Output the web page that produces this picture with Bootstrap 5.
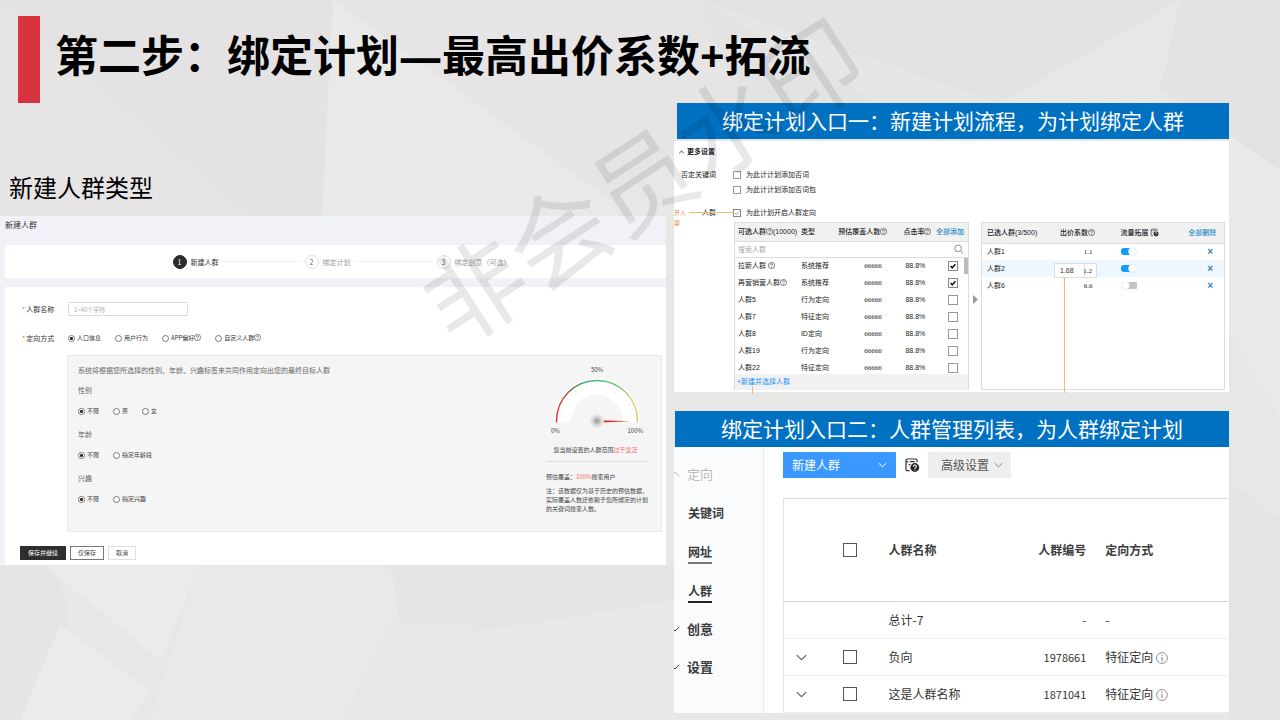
<!DOCTYPE html>
<html lang="zh-CN">
<head>
<meta charset="utf-8">
<meta name="viewport" content="width=device-width, initial-scale=1">
<title>第二步：绑定计划</title>
<link href="https://cdn.jsdelivr.net/npm/bootstrap@5.3.0/dist/css/bootstrap.min.css" rel="stylesheet">
<script src="https://cdn.jsdelivr.net/npm/bootstrap@5.3.0/dist/js/bootstrap.bundle.min.js"></script>
<style>
  body { font-family: "Noto Sans CJK SC", sans-serif; background: #e7e6e6; color: #333; }
  a { text-decoration: none; }
  .slide { min-height: 100vh; padding-bottom: 7px; }
  .backdrop { position: absolute; inset: 0; width: 100%; height: 100%; }
  .watermark { position: absolute; left: 50%; top: 177px; font-size: 100px; line-height: 150px; white-space: nowrap;
    transform: translate(-50%, -50%) rotate(-33deg); color: rgba(0, 0, 0, .09); pointer-events: none; z-index: 5; }

  .title-bar { padding: 16px 18px 0; gap: 15px; }
  .title-bar i { width: 22px; height: 87px; background: #d7343f; }
  .title-bar h1 { font-family: "Open Sans", "Noto Sans CJK SC", sans-serif; font-size: 43px; font-weight: 700; color: #000; line-height: 80px; margin: 0; white-space: nowrap; }
  .columns { gap: 8px; padding-right: 51px; }
  .col-form { flex: 666 1 0; min-width: 0; padding-top: 66px; }
  .col-entries { flex: 555 1 0; min-width: 0; }
  .subtitle { font-size: 24px; line-height: 36px; color: #000; margin: 0 0 11px 9px; font-weight: 400; }
  .banner { background: #0070c1; color: #fff; font-size: 21px; line-height: 34px; padding-bottom: 2px; text-align: center; margin: 0; font-weight: 400; white-space: nowrap; }

  /* audience form */
  .form-shot { background: #f1f2f7; padding-left: 5px; font-size: 7px; line-height: 10px; }
  .form-shot h3 { font-size: 8px; line-height: 10px; font-weight: 400; margin: 0; padding: 4px 0 15px; }
  .steps { height: 33px; background: #fff; padding-left: 12px; gap: 4px; list-style: none; margin: 0 0 9px; }
  .steps li { gap: 4px; color: #999; }
  .steps li b { width: 14px; height: 14px; border: 1px solid #ddd; border-radius: 50%; text-align: center; line-height: 12px; font-weight: 400; color: #666; }
  .steps li.now { color: #333; }
  .steps li.now b { background: #2b2b2b; border-color: #2b2b2b; color: #fff; }
  .steps .rule { width: 78px; height: 1px; background: #eee; }
  .form-card { background: #fff; padding: 15px 4px 5px 15px; }
  .form-card .field-name { width: 48px; padding-left: 2px; white-space: nowrap; }
  .form-card .field-name::before { content: "*"; color: #e66; margin-right: 1px; }
  .name-box { width: 120px; height: 14px; border: 1px solid #ddd; border-radius: 0; padding: 0 5px; font-size: 6px; line-height: 12px; min-height: 0; }
  .name-box::placeholder { color: #aaa; }
  .choices { gap: 14px; font-size: 6px; height: 10px; }
  .choices label { display: flex; align-items: center; gap: 2px; white-space: nowrap; }
  .choices .form-check-input { width: 7px; height: 7px; margin: 0; border: 1px solid #777; background-color: #fff; box-shadow: none; }
  .choices .form-check-input:checked { background-image: radial-gradient(circle, #222 0 1px, transparent 2px); background-size: 100%; }
  .rules-box { margin-left: 47px; border: 1px solid #e9e9e9; background: #f5f5f5; padding: 9px 13px 18px 10px; color: #666; }
  .rules-intro { margin-bottom: 10px; }
  .rules-box .choices { color: #444; margin: 11px 0 13px; }
  .rules-box .choices:last-child { margin-bottom: 0; }
  .estimate { width: 102px; font-size: 6px; line-height: 9px; color: #444; white-space: nowrap; }
  .estimate em { font-style: normal; color: #ef6a66; }
  .estimate .verdict { margin: 8px 0 7px; text-align: center; padding-right: 3px; }
  .estimate .coverage { border-top: 1px solid #ddd; padding-top: 10px; margin-bottom: 5px; }
  .act { height: 14px; border-radius: 0; font-size: 6px; line-height: 12px; padding: 0 7px; }
  .act-main { background: #2e2e2e; color: #fff; border-color: #2e2e2e; }
  .act-line { background: #fff; border-color: #777; color: #444; }
  .act-plain { background: #fff; border-color: #e0e0e0; color: #444; }

  /* plan settings */
  .plan-shot { margin-top: 2px; background: #fff; padding: 6px 4px 2px 0; font-size: 7px; line-height: 10px; color: #222; font-family: "Liberation Serif", "Noto Sans CJK SC", serif; position: relative; }
  .plan-shot table, .sansy { font-family: "Liberation Sans", "Noto Sans CJK SC", sans-serif; }
  .more { font-size: 7px; line-height: 10px; font-weight: 700; margin: 0 0 13px 5px; gap: 3px; }
  .opt-row .opt-name { width: 59px; padding-right: 17px; text-align: right; white-space: nowrap; }
  .opt-row label { display: flex; align-items: center; gap: 5px; height: 10px; }
  .box8, .box10, .box14 { border-radius: 0 !important; margin: 0 !important; border: 1px solid #999; background-color: #fff !important; box-shadow: none !important; display: block; }
  .box8 { width: 8px; height: 8px; }
  .box10 { width: 10px; height: 10px; }
  .box14 { width: 14px; height: 14px; border-color: #555; }
  .box10:checked { border-color: #888; background-image: url("data:image/svg+xml,%3Csvg xmlns='http://www.w3.org/2000/svg' viewBox='0 0 10 10'%3E%3Cpath d='M2 5l2 2.200L8 2.800' fill='none' stroke='%23111' stroke-width='1.900'/%3E%3C/svg%3E") !important; }
  .box8:checked { border-color: #888; background-image: url("data:image/svg+xml,%3Csvg xmlns='http://www.w3.org/2000/svg' viewBox='0 0 10 10'%3E%3Cpath d='M1.500 5l2.500 2.500L8.500 2.500' fill='none' stroke='%23777' stroke-width='1.200'/%3E%3C/svg%3E") !important; }
  .callout { position: absolute; left: 0; top: 67px; color: #f08a3c; white-space: nowrap; font-size: 6px; }
  .callout-line { position: absolute; left: 15px; top: 71px; width: 45px; height: 1px; background: #f7b872; }
  .pointer-line { position: absolute; width: 1px; background: #f7b872; }
  .pickers { padding-left: 60px; margin-top: 4px; gap: 4px; }
  .picker-a { flex: 235 1 0; min-width: 0; border: 1px solid #ddd; height: 168px; position: relative; }
  .picker-b { flex: 244 1 0; min-width: 0; border: 1px solid #ddd; height: 168px; position: relative; margin-left: -1px; }
  .grid7 { table-layout: fixed; margin: 0; --bs-table-bg: transparent; font-size: 7px; line-height: 10px; color: #222; white-space: nowrap; }
  .grid7 th { height: 18px; padding: 0 0 0 3px; font-weight: 500; background: #f1f1f1; border-bottom: 1px solid #ddd; vertical-align: middle; color: #222; }
  .grid7 td { height: 17px; padding: 0 0 0 3px; border: 0; vertical-align: middle; color: #222; }
  .grid7 a { color: #2a8cc4; }
  .grid7 .seen { padding-left: 29px; font-family: "Liberation Serif", serif; }
  .grid7 .rate { padding-left: 5px; }
  .grid7 .pick { padding-left: 15px; }
  .grid7 .picked th { height: 20px; }
  .grid7 .picked th:first-child, .grid7 .picked td:first-child { padding-left: 5px; }
  .finder { height: 16px; border-bottom: 1px solid #ddd; padding: 0 4px 0 3px; }
  .finder input { border: 0; padding: 0; font-size: 7px; line-height: 10px; min-height: 0; height: 12px; background: none; }
  .finder input::placeholder { color: #aaa; }
  .rows-window { height: 116px; overflow: hidden; position: relative; }
  .rows-window::after { content: ""; position: absolute; right: 0; top: 0; width: 4px; height: 16px; background: #bbb; }
  .new-link { display: block; height: 16px; line-height: 16px; padding-left: 2px; background: #f1f1f1; color: #1890ff; }
  .q { width: 7px; height: 7px; vertical-align: -1px; }
  .toggle { width: 16px !important; height: 9px !important; margin: 0 !important; border: 0 !important; display: block; border-radius: 0 !important; background-color: transparent !important; box-shadow: none !important; background-size: 100% 100% !important; background-position: 0 0 !important;
    background-image: url("data:image/svg+xml,%3Csvg xmlns='http://www.w3.org/2000/svg' viewBox='0 0 16 9'%3E%3Crect x='3' y='1' width='13' height='7' rx='1' fill='%23c4c4c4'/%3E%3Ccircle cx='4.500' cy='4.500' r='4' fill='%23fff' stroke='%23ddd' stroke-width='.6'/%3E%3C/svg%3E") !important; }
  .toggle:checked { background-image: url("data:image/svg+xml,%3Csvg xmlns='http://www.w3.org/2000/svg' viewBox='0 0 16 9'%3E%3Crect x='0' y='1' width='13' height='7' rx='3' fill='%23149bff'/%3E%3Ccircle cx='11.500' cy='4.500' r='4' fill='%23fff' stroke='%23ddd' stroke-width='.6'/%3E%3C/svg%3E") !important; }
  .grid7 .coef { text-align: right; padding-right: 25px; font-family: "Liberation Serif", serif; }
  .hot td { background: #eff7fe; }
  .kill { border: 0; background: none; padding: 0; margin-left: 19px; color: #3b7fc4; font-size: 10px; font-weight: 700; line-height: 10px; display: block; }
  .bid { position: absolute; left: 72px; top: 40px; width: 43px; height: 15px; border: 1px solid #ddd; background: #fff; }
  .bid input { width: 30px; height: 13px; min-height: 0; border: 0; border-right: 1px solid #ddd; border-radius: 0; padding: 0 5px; font-size: 7px; line-height: 13px; color: #333; background: none; }
  .bid span { position: absolute; right: 4px; top: 2px; font-family: "Liberation Serif", serif; }

  /* audience list */
  .entry-two { margin: 19px 0 0 1px; }
  .list-shot { background: #fff; overflow: hidden; }
  .side { width: 90px; padding-top: 8px; background: #f9fbfd; border-right: 1px solid #e6eaee; flex-wrap: nowrap; }
  .side a { color: #3c3c3c; font-size: 12px; font-weight: 700; height: 39px; padding-left: 14px; display: flex; align-items: center; }
  .side a.top { font-size: 13px; height: 38px; padding-left: 0; gap: 7px; }
  .side a.open { color: #bbb; font-weight: 400; }
  .side a span { line-height: 20px; border: solid transparent; border-width: 2px 0; }
  .side a.mid span { border-bottom-color: #777; }
  .side a.cur span { border-bottom-color: #222; }
  .list-main { padding: 5px 0 0 19px; min-width: 0; }
  .tool { height: 26px; border: 0; border-radius: 0; font-size: 12px; line-height: 26px; padding: 0 9px; display: flex; align-items: center; justify-content: space-between; }
  .tool-new { background: #3b98ff; color: #fff; width: 113px; }
  .tool-adv { background: #eee; color: #555; width: 83px; padding: 0 8px 0 13px; }
  .tool-adv svg { color: #888; }
  .tool-help { margin: 0 8px; width: 16px; height: 16px; }
  .grid12 { table-layout: fixed; margin: 20px 0 0; border-left: 1px solid #e3e3e3; border-top: 1px solid #ddd; font-size: 12px; line-height: 18px; white-space: nowrap; }
  .grid12 th { height: 103px; padding: 0; font-weight: 700; vertical-align: middle; border-bottom: 1px solid #d4d4d4; color: #3c3c3c; }
  .grid12 td { height: 37px; padding: 0; vertical-align: middle; border-bottom: 1px solid #eee; color: #333; }
  .grid12 .nm { padding-left: 7px; }
  .grid12 .no { text-align: right; padding-right: 9px; }
  .grid12 td.no { font-size: 11px; }
  .grid12 .way { padding-left: 10px; }
  .grid12 .box14 { margin: 0 auto !important; }
  .fold { width: 11px; height: 7px; color: #666; vertical-align: 1px; }
</style>
</head>
<body>
<svg class="d-none">
  <symbol id="q" viewBox="0 0 12 12"><circle cx="6" cy="6" r="5.300" fill="none" stroke="currentColor"/><path d="M4.300 4.800a1.700 1.700 0 1 1 2.500 1.500c-.6.3-.8.6-.8 1.200M6 8.500v1" fill="none" stroke="currentColor"/></symbol>
  <symbol id="down" viewBox="0 0 10 6"><path d="M.7.8L5 5 9.300.8" fill="none" stroke="currentColor" stroke-width="1.100"/></symbol>
  <symbol id="info" viewBox="0 0 12 12"><circle cx="6" cy="6" r="5.400" fill="none" stroke="currentColor" stroke-width=".9"/><path d="M6 2.800v1.200M6 5v4.200" stroke="currentColor" stroke-width="1.100"/></symbol>
  <symbol id="doc" viewBox="0 0 16 16"><path d="M5.500 13.700H3.300a1.300 1.300 0 0 1-1.300-1.300V3.300A1.300 1.300 0 0 1 3.300 2h8.400A1.300 1.300 0 0 1 13 3.300v2M2 4.600h2.200M5.800 4.600h5M4.600 7.600h1.800" fill="none" stroke="#333" stroke-width="1.200"/><circle cx="10.800" cy="10.500" r="4.400" fill="#222"/><path d="M9.300 9.600a1.500 1.500 0 1 1 2.200 1.200c-.5.3-.7.5-.7 1M10.800 12.500v1" fill="none" stroke="#fff" stroke-width="1.100"/></symbol>
</svg>
<main class="slide position-relative">
  <svg class="backdrop" viewBox="0 0 1280 720" preserveAspectRatio="none" aria-hidden="true">
    <rect width="1280" height="720" fill="#e7e7e6"/>
    <path d="M0 0H333L322 216H0z" fill="#e4e2e3"/>
    <path d="M0 0L250 216H0z" fill="#e6e4e5"/>
    <path d="M333 0L322 216H620L590 175z" fill="#e9e9e7"/>
    <path d="M333 0H700L740 110L610 200z" fill="#e6e4e5"/>
    <path d="M700 0H1180L1000 103H740z" fill="#e4e3e4"/>
    <path d="M700 0L1000 103H880z" fill="#e7e6e6"/>
    <path d="M1180 0H1280V170L1160 90z" fill="#e4e2e3"/>
    <path d="M1229 135L1280 170V420L1229 330z" fill="#e9e9e7"/>
    <path d="M0 566H60L80 720H0z" fill="#e5e5e4"/>
    <path d="M60 625L150 690L130 720H20z" fill="#ebebe9"/>
    <path d="M45 566H200L160 660z" fill="#ebebe9"/>
    <path d="M200 566H430L400 610L340 720H150z" fill="#e9e9e7"/>
    <path d="M390 566H674V650L400 620z" fill="#e6e5e5"/>
    <path d="M430 640L674 600V720H340z" fill="#e8e8e7"/>
    <path d="M1229 480L1280 520V720H1229z" fill="#e5e4e4"/>
  </svg>
  <div class="position-relative">
    <header class="title-bar d-flex"><i></i><h1>第二步：绑定计划—最高出价系数+拓流</h1></header>
    <div class="columns d-flex align-items-start">

      <section class="col-form">
        <h2 class="subtitle">新建人群类型</h2>
        <div class="form-shot">
          <h3>新建人群</h3>
          <ol class="steps d-flex align-items-center justify-content-center">
            <li class="now d-flex align-items-center"><b>1</b>新建人群</li><li class="rule"></li>
            <li class="d-flex align-items-center"><b>2</b>绑定计划</li><li class="rule"></li>
            <li class="d-flex align-items-center"><b>3</b>绑定创意（可选）</li>
          </ol>
          <form class="form-card">
            <div class="d-flex align-items-center">
              <label class="field-name" for="aud">人群名称</label>
              <input id="aud" class="form-control name-box" type="text" placeholder="1~40个字符">
            </div>
            <div class="d-flex align-items-center" style="margin-top:17px">
              <span class="field-name">定向方式</span>
              <div class="choices d-flex">
                <label><input class="form-check-input" type="radio" name="way" checked>人口信息</label>
                <label><input class="form-check-input" type="radio" name="way">用户行为</label>
                <label><input class="form-check-input" type="radio" name="way"><span>APP偏好<svg class="q"><use href="#q"/></svg></span></label>
                <label><input class="form-check-input" type="radio" name="way"><span>自定义人群<svg class="q"><use href="#q"/></svg></span></label>
              </div>
            </div>
            <div class="rules-box d-flex justify-content-between" style="margin-top:12px">
              <div>
                <div class="rules-intro">系统将根据您所选择的性别、年龄、兴趣标签来共同作用定向出您的最终目标人群</div>
                <div>性别</div>
                <div class="choices d-flex">
                  <label><input class="form-check-input" type="radio" name="sex" checked>不限</label>
                  <label><input class="form-check-input" type="radio" name="sex">男</label>
                  <label><input class="form-check-input" type="radio" name="sex">女</label>
                </div>
                <div>年龄</div>
                <div class="choices d-flex">
                  <label><input class="form-check-input" type="radio" name="age" checked>不限</label>
                  <label><input class="form-check-input" type="radio" name="age">指定年龄段</label>
                </div>
                <div>兴趣</div>
                <div class="choices d-flex">
                  <label><input class="form-check-input" type="radio" name="fun" checked>不限</label>
                  <label><input class="form-check-input" type="radio" name="fun">指定兴趣</label>
                </div>
              </div>
              <aside class="estimate">
                <svg class="d-block" width="102" height="72" viewBox="0 0 102 72" font-size="6" fill="#444">
                  <defs>
                    <linearGradient id="arc"><stop offset="0" stop-color="#e0342e"/><stop offset=".12" stop-color="#b8483a"/><stop offset=".28" stop-color="#52a873"/><stop offset=".5" stop-color="#45bd78"/><stop offset=".8" stop-color="#8cc878"/><stop offset=".95" stop-color="#e6cf6a"/><stop offset="1" stop-color="#ecc65a"/></linearGradient>
                    <radialGradient id="hub"><stop offset=".5" stop-color="#d2d2d2"/><stop offset="1" stop-color="#ececec"/></radialGradient>
                  </defs>
                  <path d="M8 57.500V56a43 43 0 0 1 86 0v1.500H77V56a26 26 0 0 0-52 0v1.500z" fill="#fff"/>
                  <path d="M15 56a36 36 0 0 1 72 0" fill="none" stroke="#ddd" stroke-width="2" stroke-dasharray=".5 5.155"/>
                  <path d="M10.500 57.500V56a40.500 40.500 0 0 1 81 0v1.500" fill="none" stroke="url(#arc)" stroke-width="1.400"/>
                  <path d="M55 55.200L85 56.300L55 57.400z" fill="#e2332e"/>
                  <circle cx="51" cy="56" r="7" fill="url(#hub)"/><circle cx="51" cy="56" r="2.800" fill="#aaa"/>
                  <text x="51" y="7" text-anchor="middle">50%</text><text x="5" y="68">0%</text><text x="97" y="68" text-anchor="end">100%</text>
                </svg>
                <div class="verdict">您当前设置的人群范围<em>过于宽泛</em></div>
                <div class="coverage">预估覆盖：<em>100%</em>搜索用户</div>
                <div>注：该数据仅为基于历史的预估数据，<br>实际覆盖人数还依赖于您所绑定的计划<br>的关键词搜索人数。</div>
              </aside>
            </div>
            <div class="d-flex gap-1" style="margin-top:14px">
              <button type="button" class="btn act act-main">保存并继续</button>
              <button type="button" class="btn act act-line">仅保存</button>
              <button type="button" class="btn act act-plain">取消</button>
            </div>
          </form>
        </div>
      </section>

      <section class="col-entries">
        <h2 class="banner" style="margin-left:3px">绑定计划入口一：新建计划流程，为计划绑定人群</h2>
        <div class="plan-shot">
          <h3 class="more d-flex align-items-center"><svg width="5" height="4" viewBox="0 0 10 6"><path d="M.7 5.200L5 1 9.300 5.200" fill="none" stroke="#222" stroke-width="1.800"/></svg>更多设置</h3>
          <div class="opt-row d-flex">
            <span class="opt-name">否定关键词</span>
            <div class="d-flex flex-column" style="gap:5px">
              <label><input class="form-check-input box8" type="checkbox">为此计计划添加否词</label>
              <label><input class="form-check-input box8" type="checkbox">为此计计划添加否词包</label>
            </div>
          </div>
          <div class="callout">开人<br>容</div>
          <div class="opt-row d-flex" style="margin-top:13px">
            <span class="opt-name">人群</span>
            <label><input class="form-check-input box8" type="checkbox" checked>为此计划开启人群定向</label>
          </div>
          <div class="callout-line"></div>
          <div class="pickers d-flex align-items-center">
            <div class="picker-a">
              <table class="table grid7">
                <colgroup><col style="width:27%"><col style="width:16%"><col style="width:28%"><col style="width:14%"><col style="width:15%"></colgroup>
                <thead><tr><th>可选人群<svg class="q"><use href="#q"/></svg>(10000)</th><th>类型</th><th>预估覆盖人数<svg class="q"><use href="#q"/></svg></th><th>点击率<svg class="q"><use href="#q"/></svg></th><th><a href="#">全部添加</a></th></tr></thead>
              </table>
              <div class="finder d-flex align-items-center sansy"><input class="form-control" type="search" placeholder="搜索人群" aria-label="搜索人群">
                <svg width="10" height="10" viewBox="0 0 10 10" fill="none" stroke="#888"><circle cx="4.300" cy="4.300" r="3.500"/><path d="M6.800 6.800l2.700 2.700"/></svg></div>
              <div class="rows-window">
                <table class="table grid7">
                  <colgroup><col style="width:27%"><col style="width:16%"><col style="width:28%"><col style="width:14%"><col style="width:15%"></colgroup>
                  <tbody>
                    <tr><td>拉新人群 <svg class="q"><use href="#q"/></svg></td><td>系统推荐</td><td class="seen">66666</td><td class="rate">88.8%</td><td class="pick"><input class="form-check-input box10" type="checkbox" aria-label="拉新人群" checked></td></tr>
                    <tr><td>再营销营人群<svg class="q"><use href="#q"/></svg></td><td>系统推荐</td><td class="seen">66666</td><td class="rate">88.8%</td><td class="pick"><input class="form-check-input box10" type="checkbox" aria-label="再营销营人群" checked></td></tr>
                    <tr><td>人群5</td><td>行为定向</td><td class="seen">66666</td><td class="rate">88.8%</td><td class="pick"><input class="form-check-input box10" type="checkbox" aria-label="人群5"></td></tr>
                    <tr><td>人群7</td><td>特征定向</td><td class="seen">66666</td><td class="rate">88.8%</td><td class="pick"><input class="form-check-input box10" type="checkbox" aria-label="人群7"></td></tr>
                    <tr><td>人群8</td><td>ID定向</td><td class="seen">66666</td><td class="rate">88.8%</td><td class="pick"><input class="form-check-input box10" type="checkbox" aria-label="人群8"></td></tr>
                    <tr><td>人群19</td><td>行为定向</td><td class="seen">66666</td><td class="rate">88.8%</td><td class="pick"><input class="form-check-input box10" type="checkbox" aria-label="人群19"></td></tr>
                    <tr><td>人群22</td><td>特征定向</td><td class="seen">66666</td><td class="rate">88.8%</td><td class="pick"><input class="form-check-input box10" type="checkbox" aria-label="人群22"></td></tr>
                  </tbody>
                </table>
              </div>
              <a class="new-link sansy" href="#">+新建并选择人群</a>
              <i class="pointer-line" style="left:17px;top:163px;height:8px"></i>
            </div>
            <svg width="5" height="9" viewBox="0 0 5 9" style="margin-top:-14px" class="flex-shrink-0"><path d="M0 0L5 4.500L0 9z" fill="#999"/></svg>
            <div class="picker-b">
              <table class="table grid7">
                <colgroup><col style="width:31%"><col style="width:25%"><col style="width:28%"><col style="width:16%"></colgroup>
                <thead class="picked"><tr><th>已选人群(3/500)</th><th>出价系数<svg class="q"><use href="#q"/></svg></th><th>流量拓展 <svg width="9" height="9" style="vertical-align:-2px"><use href="#doc"/></svg></th><th><a href="#">全部删除</a></th></tr></thead>
                <tbody class="picked">
                  <tr><td>人群1</td><td class="coef">1.1</td><td><input class="form-check-input toggle" type="checkbox" role="switch" aria-label="人群1流量拓展" checked></td><td><button type="button" class="kill" aria-label="删除人群1">×</button></td></tr>
                  <tr class="hot"><td>人群2</td><td></td><td><input class="form-check-input toggle" type="checkbox" role="switch" aria-label="人群2流量拓展" checked></td><td><button type="button" class="kill" aria-label="删除人群2">×</button></td></tr>
                  <tr><td>人群6</td><td class="coef">6.6</td><td><input class="form-check-input toggle" type="checkbox" role="switch" aria-label="人群6流量拓展"></td><td><button type="button" class="kill" aria-label="删除人群6">×</button></td></tr>
                </tbody>
              </table>
              <div class="bid sansy"><input class="form-control" type="text" value="1.68" aria-label="出价系数"><span>1.2</span></div>
              <i class="pointer-line" style="left:82px;top:54px;height:116px"></i>
            </div>
          </div>
        </div>

        <h2 class="banner entry-two">绑定计划入口二：人群管理列表，为人群绑定计划</h2>
        <div class="list-shot d-flex">
          <nav class="side nav flex-column flex-shrink-0">
            <a class="top open" href="#"><svg width="6" height="6" viewBox="4 0 6 6"><path d="M.7 5.200L5 1 9.300 5.200" fill="none" stroke="currentColor"/></svg>定向</a>
            <a href="#"><span>关键词</span></a>
            <a class="mid" href="#"><span>网址</span></a>
            <a class="cur" href="#"><span>人群</span></a>
            <a class="top" href="#"><svg width="6" height="6" viewBox="4 0 6 6"><path d="M.7.8L5 5 9.300.8" fill="none" stroke="currentColor"/></svg>创意</a>
            <a class="top" href="#"><svg width="6" height="6" viewBox="4 0 6 6"><path d="M.7.8L5 5 9.300.8" fill="none" stroke="currentColor"/></svg>设置</a>
          </nav>
          <div class="list-main flex-fill">
            <div class="d-flex align-items-center">
              <button type="button" class="btn tool tool-new">新建人群<svg width="9" height="6"><use href="#down"/></svg></button>
              <svg class="tool-help"><use href="#doc"/></svg>
              <button type="button" class="btn tool tool-adv">高级设置<svg width="9" height="6"><use href="#down"/></svg></button>
            </div>
            <table class="table grid12">
              <colgroup><col style="width:8%"><col style="width:14%"><col style="width:27%"><col style="width:21%"><col style="width:30%"></colgroup>
              <thead><tr><th></th><th><input class="form-check-input box14" type="checkbox" aria-label="全选"></th><th class="nm">人群名称</th><th class="no">人群编号</th><th class="way">定向方式</th></tr></thead>
              <tbody>
                <tr><td></td><td></td><td class="nm">总计-7</td><td class="no">-</td><td class="way">-</td></tr>
                <tr><td class="text-center"><svg class="fold"><use href="#down"/></svg></td><td><input class="form-check-input box14" type="checkbox" aria-label="负向"></td><td class="nm">负向</td><td class="no">1978661</td><td class="way">特征定向 <svg width="12" height="12" color="#888" style="vertical-align:-2px"><use href="#info"/></svg></td></tr>
                <tr><td class="text-center"><svg class="fold"><use href="#down"/></svg></td><td><input class="form-check-input box14" type="checkbox" aria-label="这是人群名称"></td><td class="nm">这是人群名称</td><td class="no">1871041</td><td class="way">特征定向 <svg width="12" height="12" color="#888" style="vertical-align:-2px"><use href="#info"/></svg></td></tr>
              </tbody>
            </table>
          </div>
        </div>
      </section>
    </div>
  </div>
  <div class="watermark">非会员水印</div>
</main>
</body>
</html>
